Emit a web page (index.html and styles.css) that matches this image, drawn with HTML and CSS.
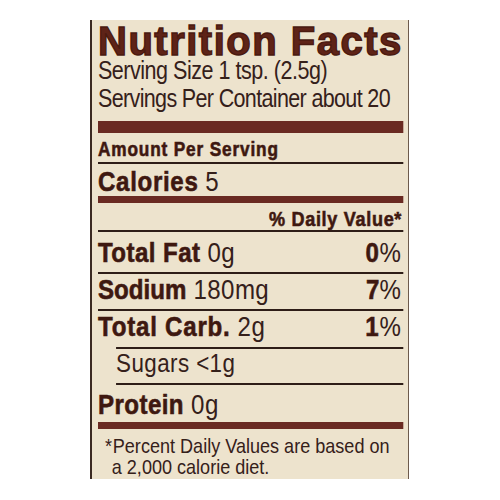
FILE: index.html
```html
<!DOCTYPE html>
<html lang="en">
<head>
  <meta charset="UTF-8" />
  <meta name="viewport" content="width=device-width, initial-scale=1.0"/>
  <title>Nutrition Facts</title>
  <link rel="stylesheet" href="styles.css">
</head>
<body>
  <div class="label">
    <h1 class="title">Nutrition Facts</h1>

    <!-- condensed type: the whole panel is squeezed horizontally -->
    <div class="facts">
      <p class="serving">Serving Size 1 tsp. (2.5g)</p>
      <p class="serving serving-count">Servings Per Container about 20</p>

      <div class="bar bar-thick"></div>

      <div class="row row-amount"><b>Amount Per Serving</b></div>
      <div class="row row-calories"><span><b>Calories</b> 5</span></div>

      <div class="bar bar-mid"></div>

      <div class="row row-dv"><b>% Daily Value*</b></div>
      <div class="row nutrient row-fat"><span><b>Total Fat</b> 0g</span><span class="pct"><b>0</b>%</span></div>
      <div class="row nutrient row-sodium"><span><b>Sodium</b> 180mg</span><span class="pct"><b>7</b>%</span></div>
      <div class="row nutrient row-carb"><span><b>Total Carb.</b> 2g</span><span class="pct"><b>1</b>%</span></div>
      <div class="row nutrient row-sugar"><span>Sugars &lt;1g</span></div>
      <div class="row nutrient row-protein"><span><b>Protein</b> 0g</span></div>

      <div class="bar bar-low"></div>

      <p class="footnote"><span class="star">*</span>Percent Daily Values are based on<br>a 2,000 calorie diet.</p>
    </div>
  </div>
</body>
</html>
```

FILE: styles.css
```css
body {
  margin: 0;
  background: #fff;
  font-family: "Liberation Sans", Arial, sans-serif;
  color: #35201a;
}
.label {
  box-sizing: border-box;
  width: 319px;
  height: 459px;
  margin: 20px 0 0 90px;
  padding: 0 5px 0 6px;
  background: #ede3cd;
  border-left: 2px solid #3b2a22;
  border-right: 1px solid #6d5a4c;
}
.title {
  margin: 0;
  padding-top: 6px;
  font-size: 40px;
  line-height: 30px;
  font-weight: 700;
  letter-spacing: 1.5px;
  white-space: nowrap;
  color: #5e2317;
  -webkit-text-stroke: 1.4px #4a1a10;
}
.facts {
  width: 354.6px;
  transform: scaleX(0.86);
  transform-origin: left top;
}
.serving {
  margin: 0;
  font-size: 25px;
  line-height: 28px;
  letter-spacing: -0.55px;
  white-space: nowrap;
}
.serving-count {
  letter-spacing: -0.75px;
}
.bar {
  background: #6a2a22;
}
.bar-thick {
  height: 12px;
  margin-top: 9px;
}
.bar-mid {
  height: 7px;
}
.bar-low {
  height: 7px;
}
.row {
  display: flex;
  justify-content: space-between;
  white-space: nowrap;
  border-bottom: 2px solid #2e1d17;
}
.row b {
  color: #3e1810;
  letter-spacing: 0.5px;
  -webkit-text-stroke: 0.6px #3e1810;
}
.row-amount {
  height: 29px;
  font-size: 20px;
  line-height: 32px;
}
.row-amount b {
  letter-spacing: 1px;
}
.row-calories {
  height: 32px;
  font-size: 28px;
  line-height: 36px;
  border-bottom: none;
}
.row-calories b {
  letter-spacing: 0.8px;
}
.row-dv {
  justify-content: flex-end;
  height: 27px;
  font-size: 21px;
  line-height: 31px;
  padding-right: 1px;
}
.row-dv b {
  letter-spacing: 0.8px;
}
.nutrient {
  font-size: 28px;
}
.nutrient span {
  letter-spacing: 0.5px;
}
.pct {
  padding-right: 2px;
}
.row-fat {
  height: 40px;
  line-height: 42px;
}
.row-sodium {
  height: 35px;
  line-height: 32px;
}
.row-sodium b {
  letter-spacing: 0;
}
.row-carb {
  height: 36px;
  line-height: 32px;
  border-bottom: none;
}
.row-carb b {
  letter-spacing: 0.9px;
}
.row-sugar {
  height: 34px;
  margin-left: 21px;
  font-size: 26px;
  line-height: 29px;
  border-top: 2px solid #2e1d17;
}
.row-protein {
  height: 37px;
  line-height: 40px;
  border-bottom: none;
}
.footnote {
  margin: 0;
  padding: 6px 0 0 16px;
  font-size: 21px;
  line-height: 21px;
  letter-spacing: 0;
  white-space: nowrap;
}
.star {
  margin-left: -8px;
  margin-right: 1px;
}
```
